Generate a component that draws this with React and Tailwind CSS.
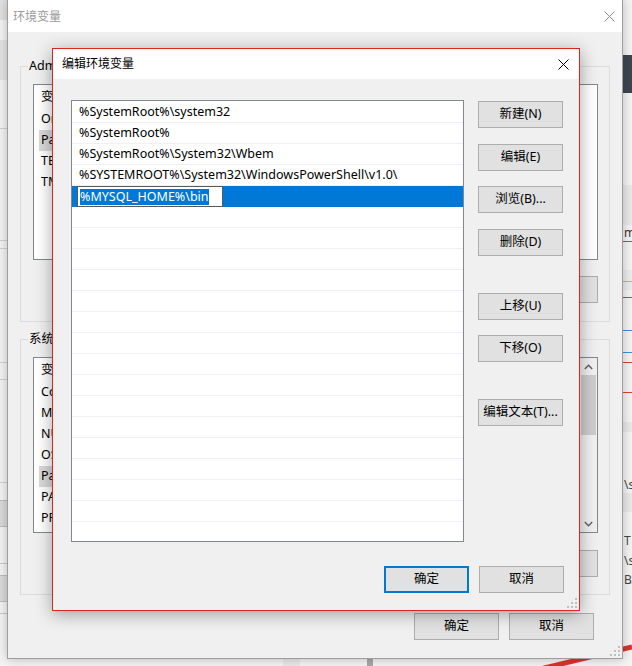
import React from "react";

const CloseIcon = ({ color = "#000" }) => (
  <svg width="11" height="11" viewBox="0 0 11 11">
    <path d="M0.5 0.5L10.5 10.5M10.5 0.5L0.5 10.5" stroke={color} strokeWidth="1" fill="none" />
  </svg>
);

const Grip = () => (
  <svg width="10" height="10" viewBox="0 0 10 10" fill="#bfbfbf">
    <rect x="8" y="0" width="2" height="2" />
    <rect x="4" y="4" width="2" height="2" />
    <rect x="8" y="4" width="2" height="2" />
    <rect x="0" y="8" width="2" height="2" />
    <rect x="4" y="8" width="2" height="2" />
    <rect x="8" y="8" width="2" height="2" />
  </svg>
);

const WinButton = ({ label, primary = false, className = "" }) => (
  <div
    className={`h-[27px] w-[85px] shrink-0 flex items-center justify-center bg-[#e1e1e1] text-[12.5px] text-black ${
      primary ? "border-2 border-[#0078d7]" : "border border-[#adadad]"
    } ${className}`}
  >
    {label}
  </div>
);

const Chevron = ({ up }) => (
  <svg width="9" height="6" viewBox="0 0 9 6">
    <path d={up ? "M0.8 5L4.5 1.3L8.2 5" : "M0.8 1L4.5 4.7L8.2 1"} stroke="#606060" strokeWidth="1.4" fill="none" />
  </svg>
);

// columns of the list view end at x=580 of the page
const VarList = ({ rows, selected, scrollbar = false }) => (
  <div className="h-[176px] bg-white border border-[#828790] flex overflow-hidden">
    <div className="flex-1 flex flex-col">
      <div className="h-[24px] w-[546px] flex items-center pl-[7px] text-[12.5px] border-r border-[#e5e5e5]">
        <span>变量</span>
      </div>
      {rows.map((name, i) => (
        <div
          key={name}
          className={`h-[21px] w-[541px] ml-[5px] flex items-center pl-[2px] text-[12.5px] text-black ${
            i === selected ? "bg-[#d9d9d9]" : ""
          }`}
        >
          <span className="truncate">{name}</span>
        </div>
      ))}
    </div>
    {scrollbar && (
      <div className="w-[17px] bg-[#f0f0f0] flex flex-col items-center">
        <div className="h-[17px] flex items-center justify-center">
          <Chevron up />
        </div>
        <div className="w-[15px] h-[60px] bg-[#cdcdcd]" />
        <div className="flex-1" />
        <div className="h-[17px] flex items-center justify-center">
          <Chevron />
        </div>
      </div>
    )}
  </div>
);

const GroupBox = ({ label, children, className = "" }) => (
  <div className={`relative h-[256px] border border-[#dcdcdc] pt-[17px] pl-[12px] pr-[11px] ${className}`}>
    <span className="absolute -top-[9px] left-[7px] px-[1px] bg-[#f0f0f0] text-[12.5px] leading-[16px] text-black">
      {label}
    </span>
    {children}
  </div>
);

const userVars = ["OneDrive", "Path", "TEMP", "TMP"];

const systemVars = [
  "ComSpec",
  "MYSQL_HOME",
  "NUMBER_OF_PROCESSORS",
  "OS",
  "Path",
  "PATHEXT",
  "PROCESSOR_ARCHITECTURE",
];

const pathEntries = [
  "%SystemRoot%\\system32",
  "%SystemRoot%",
  "%SystemRoot%\\System32\\Wbem",
  "%SYSTEMROOT%\\System32\\WindowsPowerShell\\v1.0\\",
];

const EnvironmentDialog = () => (
  <div className="absolute left-[7px] -top-[1px] w-[616px] h-[660px] border border-[#9e9e9e] flex flex-col shadow-[0_0_10px_rgba(0,0,0,0.25)]">
    <div className="h-[32px] bg-white flex items-center justify-between pl-[5px] pr-[7px] pt-[1px]">
      <span className="text-[12px] text-[#9a9a9a]">环境变量</span>
      <CloseIcon color="#8a8a8a" />
    </div>
    <div className="relative flex-1 bg-[#f0f0f0] px-[12px] pt-[34px] flex flex-col">
      <GroupBox label="Administrator 的用户变量(U)">
        <VarList rows={userVars} selected={1} />
        <div className="mt-[16px] flex justify-end gap-[10px]">
          <WinButton label="新建(N)..." />
          <WinButton label="编辑(E)..." />
          <WinButton label="删除(D)" />
        </div>
      </GroupBox>
      <GroupBox label="系统变量(S)" className="mt-[17px]">
        <VarList rows={systemVars} selected={4} scrollbar />
        <div className="mt-[17px] flex justify-end gap-[10px]">
          <WinButton label="新建(W)..." />
          <WinButton label="编辑(I)..." />
          <WinButton label="删除(L)" />
        </div>
      </GroupBox>
      <div className="mt-[18px] pr-[16px] flex justify-end gap-[10px]">
        <WinButton label="确定" />
        <WinButton label="取消" />
      </div>
      <div className="absolute right-[2px] bottom-[2px]">
        <Grip />
      </div>
    </div>
  </div>
);

const EditDialog = () => {
  const blankRows = Array.from({ length: 16 });
  return (
    <div className="absolute left-[52px] top-[48px] w-[528px] h-[563px] border border-[#e0251f] flex flex-col shadow-[0_3px_16px_rgba(0,0,0,0.35)]">
      <div className="h-[30px] bg-white flex items-center justify-between pl-[9px] pr-[10px]">
        <span className="text-[12px] text-black">编辑环境变量</span>
        <CloseIcon />
      </div>
      <div className="relative flex-1 bg-[#f0f0f0] pl-[18px] pr-[15px] pt-[21px] pb-[17px] flex flex-col">
        <div className="flex">
          <div className="w-[393px] h-[442px] pt-[1px] bg-white border border-[#828790] overflow-hidden">
            {pathEntries.map((entry) => (
              <div
                key={entry}
                className="h-[21px] border-b border-[#f0f0f0] pl-[7px] flex items-center text-[12.5px] text-black whitespace-nowrap"
              >
                {entry}
              </div>
            ))}
            <div className="h-[21px] bg-[#0078d7] pl-[5px] flex items-center">
              <div className="h-[21px] w-[146px] border border-[#5a5a5a] bg-white flex items-center pl-[2px]">
                <span className="bg-[#0078d7] text-white text-[12.5px] leading-[16px] whitespace-nowrap">
                  %MYSQL_HOME%\bin
                </span>
              </div>
            </div>
            {blankRows.map((_, i) => (
              <div key={i} className="h-[21px] border-b border-[#f0f0f0]" />
            ))}
          </div>
          <div className="ml-[14px] pt-[1px] flex flex-col">
            <WinButton label="新建(N)" />
            <WinButton label="编辑(E)" className="mt-[16px]" />
            <WinButton label="浏览(B)..." className="mt-[15px]" />
            <WinButton label="删除(D)" className="mt-[16px]" />
            <WinButton label="上移(U)" className="mt-[37px]" />
            <WinButton label="下移(O)" className="mt-[15px]" />
            <WinButton label="编辑文本(T)..." className="mt-[37px]" />
          </div>
        </div>
        <div className="mt-auto flex justify-end gap-[10px]">
          <WinButton label="确定" primary />
          <WinButton label="取消" />
        </div>
        <div className="absolute right-[2px] bottom-[2px]">
          <Grip />
        </div>
      </div>
    </div>
  );
};

const Backdrop = () => (
  <>
    {/* left edge of the window behind */}
    <div className="absolute left-0 top-0 w-[7px] h-[20px] bg-[#e2e2e2]" />
    <div className="absolute left-0 top-[40px] w-[7px] h-[40px] bg-[#e4e4e4]" />
    <div className="absolute left-0 top-[128px] w-[7px] h-px bg-[#d2d2d2]" />
    <div className="absolute left-0 top-[240px] w-[7px] h-px bg-[#d2d2d2]" />
    <div className="absolute left-0 top-[248px] w-[7px] h-px bg-[#d2d2d2]" />
    <div className="absolute left-0 top-[362px] w-[7px] h-px bg-[#d2d2d2]" />
    <div className="absolute left-0 top-[379px] w-[7px] h-px bg-[#d2d2d2]" />
    <div className="absolute left-0 top-[482px] w-[7px] h-px bg-[#d2d2d2]" />
    <div className="absolute left-0 top-[500px] w-[7px] h-[27px] bg-[#dadada] border-y border-[#bdbdbd]" />
    <div className="absolute left-0 top-[563px] w-[7px] h-px bg-[#c8c8c8]" />
    <div className="absolute left-0 top-[575px] w-[7px] h-[27px] bg-[#dadada] border-y border-[#bdbdbd]" />
    <div className="absolute left-0 top-[613px] w-[7px] h-px bg-[#c8c8c8]" />
    {/* strip under the outer window */}
    <div className="absolute left-[283px] top-[658px] w-[17px] h-[8px] bg-[#e9e9e9]" />
    <div className="absolute left-[367px] top-[658px] w-[6px] h-[8px] bg-[#a8a8a8]" />
    {/* right edge of the window behind */}
    <div className="absolute left-[623px] top-[55px] w-[9px] h-[38px] bg-[#3d4650]" />
    <div className="absolute left-[623px] top-[185px] w-[9px] h-[40px] bg-[#e9e9e9]" />
    <div className="absolute left-[624px] top-[226px] text-[12px] leading-[14px] text-[#333] overflow-hidden w-[8px]">m</div>
    <div className="absolute left-[623px] top-[241px] w-[9px] h-px bg-[#d9403a]" />
    <div className="absolute left-[623px] top-[270px] w-[9px] h-[20px] bg-[#ececec]" />
    <div className="absolute left-[623px] top-[281px] w-[9px] h-px bg-[#f09a9a]" />
    <div className="absolute left-[623px] top-[297px] w-[9px] h-px bg-[#d9403a]" />
    <div className="absolute left-[623px] top-[330px] w-[9px] h-px bg-[#3b8fd9]" />
    <div className="absolute left-[623px] top-[352px] w-[9px] h-px bg-[#3b8fd9]" />
    <div className="absolute left-[623px] top-[362px] w-[9px] h-px bg-[#d9403a]" />
    <div className="absolute left-[623px] top-[392px] w-[9px] h-px bg-[#d9403a]" />
    <div className="absolute left-[623px] top-[422px] w-[9px] h-[10px] bg-[#e9e9e9]" />
    <div className="absolute left-[623px] top-[493px] w-[9px] h-[19px] bg-[#e9e9e9]" />
    <div className="absolute left-[624px] top-[478px] text-[12px] leading-[14px] text-[#444] overflow-hidden w-[8px]">\s</div>
    <div className="absolute left-[624px] top-[534px] text-[12px] leading-[14px] text-[#444] overflow-hidden w-[8px]">T</div>
    <div className="absolute left-[624px] top-[554px] text-[12px] leading-[14px] text-[#444] overflow-hidden w-[8px]">\s</div>
    <div className="absolute left-[624px] top-[573px] text-[12px] leading-[14px] text-[#444] overflow-hidden w-[8px]">BA</div>
    <svg className="absolute left-0 top-0" width="632" height="666" viewBox="0 0 632 666">
      <path d="M540 669L632 647" stroke="#e2302c" strokeWidth="5" fill="none" />
    </svg>
  </>
);

const App = () => (
  <div className="relative w-[632px] h-[666px] overflow-hidden bg-[#f4f4f4] font-['Noto_Sans','Noto_Sans_CJK_SC',sans-serif]">
    <Backdrop />
    <EnvironmentDialog />
    <EditDialog />
  </div>
);

export default App;
